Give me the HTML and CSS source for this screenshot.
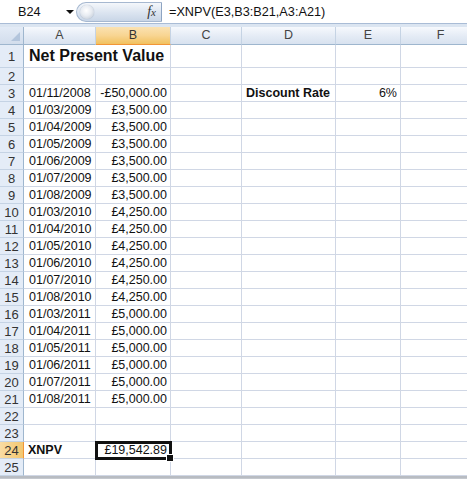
FILE: index.html
```html
<!DOCTYPE html>
<html>
<head>
<meta charset="utf-8">
<link rel="stylesheet" href="styles.css">
</head>
<body>
<div class="app">
  <div class="fbar">
    <div class="namebox"><span class="nb-text">B24</span><span class="nb-arrow"></span></div>
    <div class="pill"><span class="knob"></span><span class="fx">f<i>x</i></span></div>
    <div class="formula">=XNPV(E3,B3:B21,A3:A21)</div>
  </div>
  <div class="strip"></div>
  <div class="sheet">
    <div class="row hdr">
      <div class="corner"><span class="tri"></span></div>
      <div class="ch">A</div><div class="ch sel">B</div><div class="ch">C</div><div class="ch">D</div><div class="ch">E</div><div class="ch">F</div>
    </div>
    <div class="row r1"><div class="rh">1</div><div class="c title">Net Present Value</div><div class="c nb"></div><div class="c"></div><div class="c"></div><div class="c"></div><div class="c"></div></div>
    <div class="row"><div class="rh">2</div><div class="c"></div><div class="c"></div><div class="c"></div><div class="c"></div><div class="c"></div><div class="c"></div></div>
    <div class="row"><div class="rh">3</div><div class="c">01/11/2008</div><div class="c num">-£50,000.00</div><div class="c"></div><div class="c bold">Discount Rate</div><div class="c num">6%</div><div class="c"></div></div>
    <div class="row"><div class="rh">4</div><div class="c">01/03/2009</div><div class="c num">£3,500.00</div><div class="c"></div><div class="c"></div><div class="c"></div><div class="c"></div></div>
    <div class="row"><div class="rh">5</div><div class="c">01/04/2009</div><div class="c num">£3,500.00</div><div class="c"></div><div class="c"></div><div class="c"></div><div class="c"></div></div>
    <div class="row"><div class="rh">6</div><div class="c">01/05/2009</div><div class="c num">£3,500.00</div><div class="c"></div><div class="c"></div><div class="c"></div><div class="c"></div></div>
    <div class="row"><div class="rh">7</div><div class="c">01/06/2009</div><div class="c num">£3,500.00</div><div class="c"></div><div class="c"></div><div class="c"></div><div class="c"></div></div>
    <div class="row"><div class="rh">8</div><div class="c">01/07/2009</div><div class="c num">£3,500.00</div><div class="c"></div><div class="c"></div><div class="c"></div><div class="c"></div></div>
    <div class="row"><div class="rh">9</div><div class="c">01/08/2009</div><div class="c num">£3,500.00</div><div class="c"></div><div class="c"></div><div class="c"></div><div class="c"></div></div>
    <div class="row"><div class="rh">10</div><div class="c">01/03/2010</div><div class="c num">£4,250.00</div><div class="c"></div><div class="c"></div><div class="c"></div><div class="c"></div></div>
    <div class="row"><div class="rh">11</div><div class="c">01/04/2010</div><div class="c num">£4,250.00</div><div class="c"></div><div class="c"></div><div class="c"></div><div class="c"></div></div>
    <div class="row"><div class="rh">12</div><div class="c">01/05/2010</div><div class="c num">£4,250.00</div><div class="c"></div><div class="c"></div><div class="c"></div><div class="c"></div></div>
    <div class="row"><div class="rh">13</div><div class="c">01/06/2010</div><div class="c num">£4,250.00</div><div class="c"></div><div class="c"></div><div class="c"></div><div class="c"></div></div>
    <div class="row"><div class="rh">14</div><div class="c">01/07/2010</div><div class="c num">£4,250.00</div><div class="c"></div><div class="c"></div><div class="c"></div><div class="c"></div></div>
    <div class="row"><div class="rh">15</div><div class="c">01/08/2010</div><div class="c num">£4,250.00</div><div class="c"></div><div class="c"></div><div class="c"></div><div class="c"></div></div>
    <div class="row"><div class="rh">16</div><div class="c">01/03/2011</div><div class="c num">£5,000.00</div><div class="c"></div><div class="c"></div><div class="c"></div><div class="c"></div></div>
    <div class="row"><div class="rh">17</div><div class="c">01/04/2011</div><div class="c num">£5,000.00</div><div class="c"></div><div class="c"></div><div class="c"></div><div class="c"></div></div>
    <div class="row"><div class="rh">18</div><div class="c">01/05/2011</div><div class="c num">£5,000.00</div><div class="c"></div><div class="c"></div><div class="c"></div><div class="c"></div></div>
    <div class="row"><div class="rh">19</div><div class="c">01/06/2011</div><div class="c num">£5,000.00</div><div class="c"></div><div class="c"></div><div class="c"></div><div class="c"></div></div>
    <div class="row"><div class="rh">20</div><div class="c">01/07/2011</div><div class="c num">£5,000.00</div><div class="c"></div><div class="c"></div><div class="c"></div><div class="c"></div></div>
    <div class="row"><div class="rh">21</div><div class="c">01/08/2011</div><div class="c num">£5,000.00</div><div class="c"></div><div class="c"></div><div class="c"></div><div class="c"></div></div>
    <div class="row"><div class="rh">22</div><div class="c"></div><div class="c"></div><div class="c"></div><div class="c"></div><div class="c"></div><div class="c"></div></div>
    <div class="row"><div class="rh">23</div><div class="c"></div><div class="c"></div><div class="c"></div><div class="c"></div><div class="c"></div><div class="c"></div></div>
    <div class="row"><div class="rh sel">24</div><div class="c bold">XNPV</div><div class="c num active">£19,542.89<span class="handle"></span></div><div class="c"></div><div class="c"></div><div class="c"></div><div class="c"></div></div>
    <div class="row"><div class="rh">25</div><div class="c"></div><div class="c"></div><div class="c"></div><div class="c"></div><div class="c"></div><div class="c"></div></div>
  </div>
</div>
</body>
</html>
```
FILE: styles.css
```css
html, body {
  margin: 0;
  padding: 0;
}
body {
  background: #c4c8ce;
  font-family: "Liberation Sans", Arial, sans-serif;
  overflow: hidden;
  width: 467px;
  height: 479px;
}
.app {
  width: 467px;
  overflow: hidden;
}
.fbar {
  height: 23px;
  background: #fff;
  display: flex;
  align-items: stretch;
  border-bottom: 1px solid #a9bcd6;
}
.namebox {
  width: 76px;
  display: flex;
  align-items: center;
  position: relative;
  font-size: 12.7px;
  color: #111;
}
.nb-text {
  margin-left: 18px;
}
.nb-arrow {
  margin-left: 25px;
  width: 0;
  height: 0;
  border-left: 4px solid transparent;
  border-right: 4px solid transparent;
  border-top: 4px solid #111;
}
.pill {
  width: 86px;
  margin: 2px 0 0;
  height: 20px;
  box-sizing: border-box;
  border-radius: 10px 0 0 10px;
  background: linear-gradient(#f4f7fb, #dbe4f0 55%, #c9d6e7);
  border: 1px solid #a6b8d0;
  border-right: 1px solid #8ea4c2;
  display: flex;
  align-items: center;
  position: relative;
}
.knob {
  width: 14px;
  height: 14px;
  border-radius: 50%;
  margin-left: 3px;
  background: radial-gradient(circle at 45% 40%, #ffffff 0%, #e8ecf2 45%, #b9c3d0 100%);
  box-shadow: 0 0 1px #8d9bb0;
}
.fx {
  margin-left: auto;
  margin-right: 5px;
  font-family: "Liberation Serif", "Times New Roman", serif;
  font-style: italic;
  font-size: 14px;
  color: #333;
}
.fx i {
  font-size: 11px;
}
.formula {
  flex: 1;
  padding-left: 7px;
  display: flex;
  align-items: center;
  font-size: 12.7px;
  color: #111;
}
.strip {
  height: 3px;
  background: #dbe5f1;
}
.sheet {
  background: #fff;
  width: 467px;
  border-bottom: 2px solid #b8bcc2;
}
.row {
  display: grid;
  grid-template-columns: 24px 72px 75px 71px 94px 65px 80px;
  height: 17px;
}
.row.hdr {
  height: 18px;
}
.row.r1 {
  height: 23px;
}
.corner {
  background: linear-gradient(#e3ebf6, #d2ddec);
  border-right: 1px solid #9eb6ce;
  border-bottom: 1px solid #9eb6ce;
  box-sizing: border-box;
  position: relative;
}
.tri {
  position: absolute;
  right: 3px;
  bottom: 3px;
  width: 0;
  height: 0;
  border-left: 9px solid transparent;
  border-bottom: 9px solid #b3c5dc;
}
.ch {
  background: linear-gradient(#f6f9fd, #e4ebf5 55%, #d8e2ef);
  border-right: 1px solid #c5d3e4;
  border-bottom: 1px solid #9eb6ce;
  box-sizing: border-box;
  text-align: center;
  font-size: 12.5px;
  line-height: 17px;
  color: #444;
}
.ch.sel {
  background: linear-gradient(#fae2b2, #f8d592 50%, #f1c15f);
  border-bottom-color: #f29536;
  color: #333;
}
.rh {
  background: #e4ecf7;
  border-right: 1px solid #9eb6ce;
  border-bottom: 1px solid #c5d3e4;
  box-sizing: border-box;
  text-align: center;
  font-size: 13px;
  color: #333;
  display: flex;
  align-items: center;
  justify-content: center;
}
.rh.sel {
  background: linear-gradient(90deg, #f9dca4, #f3c76f);
  border-right-color: #f29536;
}
.c {
  border-right: 1px solid #d0d7e5;
  border-bottom: 1px solid #d0d7e5;
  box-sizing: border-box;
  font-size: 12.5px;
  color: #111;
  padding: 0 3px 0 5px;
  display: flex;
  align-items: center;
  white-space: nowrap;
  position: relative;
}
.c.title {
  font-weight: bold;
  font-size: 16px;
  padding-left: 5px;
  overflow: visible;
  border-right: none;
}
.c.nb {
  border-right: 1px solid #d0d7e5;
}
.c.bold {
  font-weight: bold;
  padding-left: 4px;
}
.c.num {
  justify-content: flex-end;
}
.c.active {
  outline: 3px solid #111;
  outline-offset: -2px;
  z-index: 2;
}
.handle {
  position: absolute;
  right: -4px;
  bottom: -4px;
  width: 6px;
  height: 6px;
  background: #111;
  border: 1px solid #fff;
}
```
